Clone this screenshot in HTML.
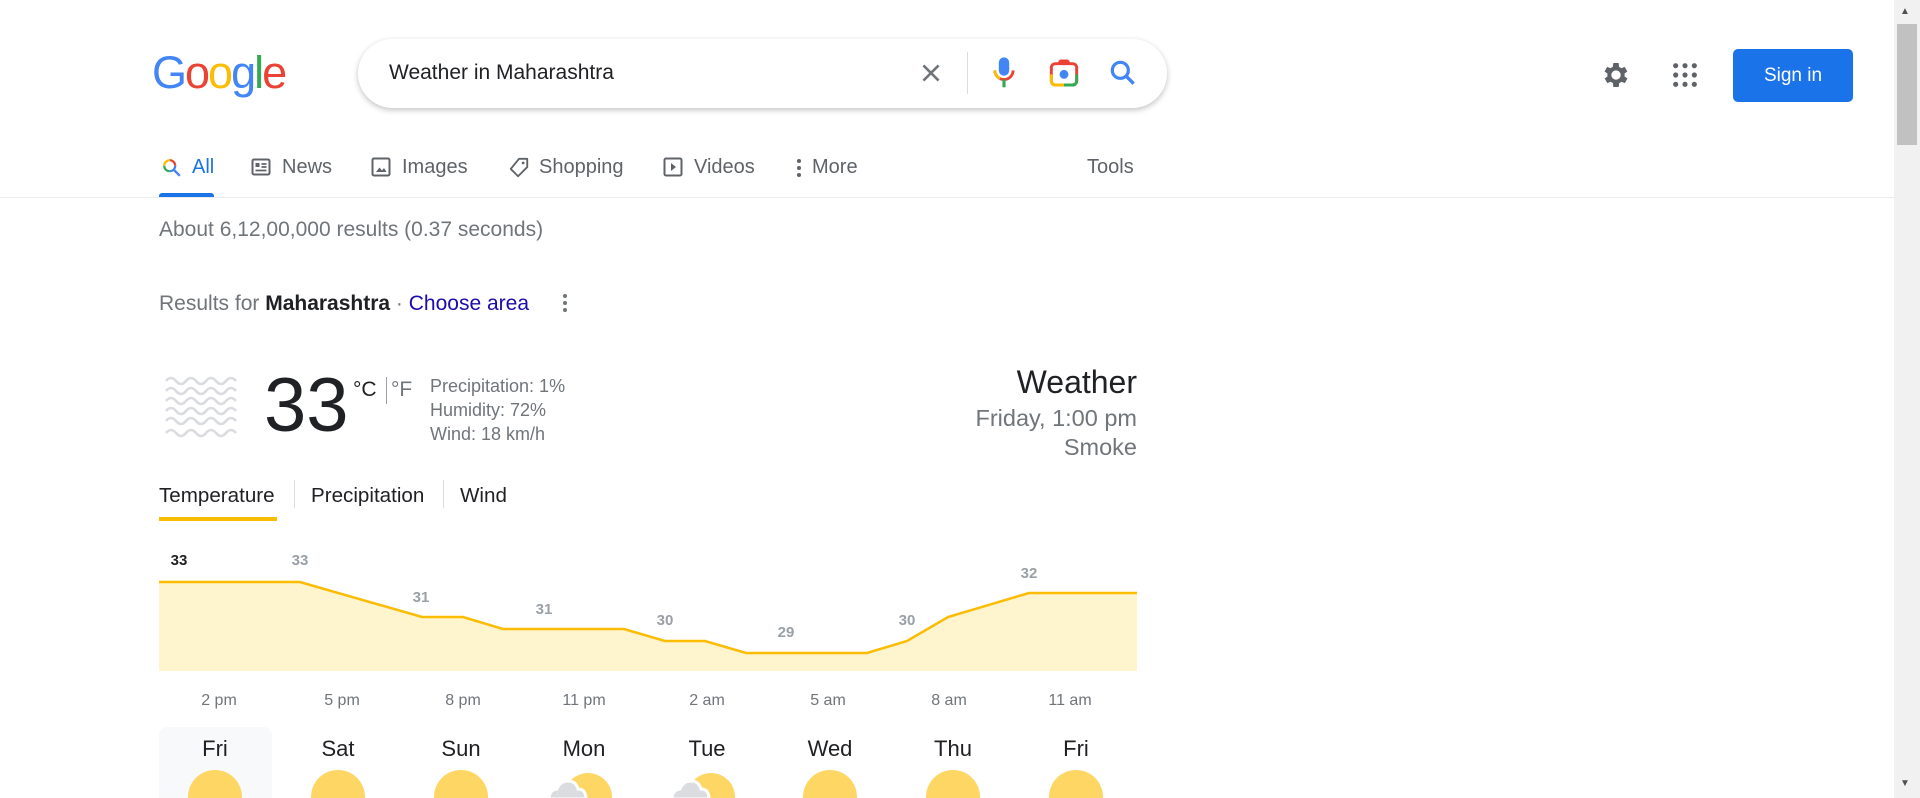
<!DOCTYPE html>
<html><head><meta charset="utf-8"><style>
*{margin:0;padding:0;box-sizing:border-box}
body{width:1920px;height:798px;overflow:hidden;background:#fff;font-family:"Liberation Sans",Arial,sans-serif;position:relative;color:#202124}
.a{position:absolute;white-space:nowrap}
.tab{position:absolute;top:156px;font-size:20px;color:#5f6368}
.tab svg{position:absolute;left:-31px;top:1px}
</style></head><body>
<div class="a" style="left:152px;top:47px;font-size:45px;letter-spacing:-2px;font-weight:normal"><span style="color:#4285f4">G</span><span style="color:#ea4335">o</span><span style="color:#fbbc05">o</span><span style="color:#4285f4">g</span><span style="color:#34a853">l</span><span style="color:#ea4335">e</span></div>
<div class="a" style="left:358px;top:39px;width:809px;height:69px;border-radius:35px;background:#fff;box-shadow:0 2px 6px rgba(32,33,36,.28)"></div>
<div class="a" style="left:389px;top:61px;font-size:21px;color:#202124">Weather in Maharashtra</div>
<svg class="a" style="left:918px;top:60px" width="26" height="26" viewBox="0 0 24 24"><path d="M5 5L19 19M19 5L5 19" stroke="#70757a" stroke-width="2.4"/></svg>
<div class="a" style="left:967px;top:52px;width:1px;height:42px;background:#dadce0"></div>
<svg class="a" style="left:991px;top:56px" width="26" height="34" viewBox="0 0 20 26"><rect x="6" y="1" width="8" height="14" rx="4" fill="#4285f4"/><path d="M3 11a7 7 0 0 0 14 0" stroke="#ea4335" stroke-width="2.2" fill="none"/><path d="M10 18v6" stroke="#34a853" stroke-width="2.4"/><path d="M3 11a7 7 0 0 0 4 6.3" stroke="#fbbc04" stroke-width="2.2" fill="none"/></svg>
<svg class="a" style="left:1048px;top:57px" width="32" height="32" viewBox="0 0 24 24"><rect x="2.5" y="5" width="19" height="16" rx="3" fill="none" stroke="#ea4335" stroke-width="2.2"/><path d="M2.5 13v5a3 3 0 0 0 3 3H12" stroke="#fbbc04" stroke-width="2.2" fill="none"/><path d="M12 21h6.5a3 3 0 0 0 3-3V13" stroke="#34a853" stroke-width="2.2" fill="none"/><path d="M8 5l1.5-2h5L16 5" stroke="#ea4335" stroke-width="2.2" fill="none"/><circle cx="12" cy="13" r="3.3" fill="#4285f4"/></svg>
<svg class="a" style="left:1107px;top:57px" width="32" height="32" viewBox="0 0 24 24"><circle cx="10" cy="10" r="6" fill="none" stroke="#4285f4" stroke-width="2.4"/><path d="M14.5 14.5L20 20" stroke="#4285f4" stroke-width="2.6"/></svg>
<svg class="a" style="left:1600px;top:59px" width="32" height="32" viewBox="0 0 24 24"><path fill="#5f6368" d="M19.4 13a7.5 7.5 0 0 0 0-2l2.1-1.6-2-3.5-2.5 1a7 7 0 0 0-1.7-1L15 3h-4l-.4 2.9a7 7 0 0 0-1.7 1l-2.5-1-2 3.5L6.6 11a7.5 7.5 0 0 0 0 2l-2.1 1.6 2 3.5 2.5-1a7 7 0 0 0 1.7 1L11 21h4l.4-2.9a7 7 0 0 0 1.7-1l2.5 1 2-3.5zM13 15.5a3.5 3.5 0 1 1 0-7 3.5 3.5 0 0 1 0 7z" transform="translate(-1 0)"/></svg>
<svg class="a" style="left:1671px;top:61px" width="28" height="28" viewBox="0 0 24 24" fill="#5f6368"><circle cx="4" cy="4" r="2.2"/><circle cx="12" cy="4" r="2.2"/><circle cx="20" cy="4" r="2.2"/><circle cx="4" cy="12" r="2.2"/><circle cx="12" cy="12" r="2.2"/><circle cx="20" cy="12" r="2.2"/><circle cx="4" cy="20" r="2.2"/><circle cx="12" cy="20" r="2.2"/><circle cx="20" cy="20" r="2.2"/></svg>
<div class="a" style="left:1733px;top:49px;width:120px;height:53px;border-radius:5px;background:#1a73e8;color:#fff;font-size:19px;text-align:center;line-height:53px">Sign in</div>
<div class="a" style="left:1894px;top:0;width:26px;height:798px;background:#f1f1f1"></div>
<div class="a" style="left:1897px;top:24px;width:20px;height:121px;background:#c1c1c1"></div>
<div class="a" style="left:1900px;top:6px;font-size:10px;color:#505050">▲</div>
<div class="a" style="left:1900px;top:778px;font-size:10px;color:#505050">▼</div>

<div class="tab" style="left:192px;color:#1a73e8"><svg width="22" height="22" viewBox="0 0 24 24"><path d="M9.5 3.5a6 6 0 0 1 6 6" stroke="#ea4335" stroke-width="2.4" fill="none"/><path d="M15.5 9.5a6 6 0 0 1-6 6" stroke="#4285f4" stroke-width="2.4" fill="none"/><path d="M9.5 15.5a6 6 0 0 1-6-6" stroke="#34a853" stroke-width="2.4" fill="none"/><path d="M3.5 9.5a6 6 0 0 1 6-6" stroke="#fbbc04" stroke-width="2.4" fill="none"/><path d="M14 14l6.5 6.5" stroke="#4285f4" stroke-width="2.6"/></svg>All</div>
<div class="tab" style="left:282px"><svg width="20" height="20" viewBox="0 0 20 20"><rect x="1.5" y="2.5" width="17" height="15" rx="1.5" fill="none" stroke="#5f6368" stroke-width="2"/><rect x="4.5" y="6" width="4" height="4" fill="#5f6368"/><path d="M10.5 7h5M10.5 10h5M4.5 13.5h11" stroke="#5f6368" stroke-width="1.8"/></svg>News</div>
<div class="tab" style="left:402px"><svg width="20" height="20" viewBox="0 0 20 20"><rect x="1.5" y="1.5" width="17" height="17" rx="1.5" fill="none" stroke="#5f6368" stroke-width="2"/><path d="M5 15l3.5-4.5 2.5 3 2-2.5 2.5 4z" fill="#5f6368"/></svg>Images</div>
<div class="tab" style="left:539px"><svg width="22" height="22" viewBox="0 0 24 24"><path d="M12 2h9v9L11 21 3 13z" fill="none" stroke="#5f6368" stroke-width="2" stroke-linejoin="round"/><circle cx="16.5" cy="6.5" r="1.5" fill="#5f6368"/></svg>Shopping</div>
<div class="tab" style="left:694px"><svg width="20" height="20" viewBox="0 0 20 20"><rect x="1.5" y="1.5" width="17" height="17" rx="1.5" fill="none" stroke="#5f6368" stroke-width="2"/><path d="M8 6l5 4-5 4z" fill="#5f6368"/></svg>Videos</div>
<div class="tab" style="left:812px"><svg style="left:-17px" width="8" height="22" viewBox="0 0 8 22"><circle cx="4" cy="4" r="2" fill="#5f6368"/><circle cx="4" cy="11" r="2" fill="#5f6368"/><circle cx="4" cy="18" r="2" fill="#5f6368"/></svg>More</div>
<div class="tab" style="left:1087px">Tools</div>
<div class="a" style="left:159px;top:193px;width:55px;height:4px;background:#1a73e8;border-radius:3px 3px 0 0"></div>
<div class="a" style="left:0;top:197px;width:1894px;height:1px;background:#ebebeb"></div>

<div class="a" style="left:159px;top:218px;font-size:21px;color:#70757a">About 6,12,00,000 results (0.37 seconds)</div>
<div class="a" style="left:159px;top:292px;font-size:21px;color:#70757a">Results for <b style="color:#202124">Maharashtra</b> · <span style="color:#1a0dab">Choose area</span></div>
<svg class="a" style="left:561px;top:292px" width="8" height="24"><circle cx="4" cy="4" r="2" fill="#70757a"/><circle cx="4" cy="11" r="2" fill="#70757a"/><circle cx="4" cy="18" r="2" fill="#70757a"/></svg>

<svg class="a" style="left:165px;top:376px" width="78" height="66" viewBox="0 0 78 66"><g fill="none" stroke="#dadce0" stroke-width="2.6">
<path d="M1 5q5-6 10 0t10 0t10 0t10 0t10 0t10 0t10 0"/><path d="M1 15q5-6 10 0t10 0t10 0t10 0t10 0t10 0t10 0"/><path d="M1 25q5-6 10 0t10 0t10 0t10 0t10 0t10 0t10 0"/><path d="M1 35q5-6 10 0t10 0t10 0t10 0t10 0t10 0t10 0"/><path d="M1 45q5-6 10 0t10 0t10 0t10 0t10 0t10 0t10 0"/><path d="M1 57q5-6 10 0t10 0t10 0t10 0t10 0t10 0t10 0"/></g></svg>
<div class="a" style="left:264px;top:368px;font-size:76px;line-height:76px;color:#202124">33</div>
<div class="a" style="left:353px;top:378px;font-size:21px;color:#202124">°C</div>
<div class="a" style="left:386px;top:377px;width:1px;height:27px;background:#9aa0a6"></div>
<div class="a" style="left:391px;top:378px;font-size:21px;color:#70757a">°F</div>
<div class="a" style="left:430px;top:374px;font-size:18px;line-height:24px;color:#70757a">Precipitation: 1%<br>Humidity: 72%<br>Wind: 18 km/h</div>
<div class="a" style="right:783px;top:364px;font-size:32px;color:#202124;text-align:right">Weather</div>
<div class="a" style="right:783px;top:404px;font-size:23.5px;line-height:29px;color:#70757a;text-align:right">Friday, 1:00 pm<br>Smoke</div>

<div class="a" style="left:159px;top:484px;font-size:20.6px;color:#202124">Temperature</div>
<div class="a" style="left:294px;top:480px;width:1px;height:28px;background:#dadce0"></div>
<div class="a" style="left:311px;top:484px;font-size:20.6px;color:#202124">Precipitation</div>
<div class="a" style="left:443px;top:480px;width:1px;height:28px;background:#dadce0"></div>
<div class="a" style="left:460px;top:484px;font-size:20.6px;color:#202124">Wind</div>
<div class="a" style="left:159px;top:517px;width:118px;height:4px;background:#fbbc04"></div>

<svg class="a" style="left:0;top:0" width="1200" height="798">
<path d="M159 582L300 582L422 617L463 617L503 629L624 629L665 641L705 641L746 653L867 653L907 641L948 617L1029 593L1137 593L1137 671L159 671Z" fill="#fef4cd"/>
<path d="M159 582L300 582L422 617L463 617L503 629L624 629L665 641L705 641L746 653L867 653L907 641L948 617L1029 593L1137 593" fill="none" stroke="#fbbc04" stroke-width="2.5"/>
<g font-family="Liberation Sans,Arial,sans-serif" font-weight="bold" font-size="15" fill="#9aa0a6" text-anchor="middle">
<text x="179" y="565" fill="#202124">33</text><text x="300" y="565">33</text><text x="421" y="602">31</text><text x="544" y="614">31</text><text x="665" y="625">30</text><text x="786" y="637">29</text><text x="907" y="625">30</text><text x="1029" y="578">32</text></g>
<g font-family="Liberation Sans,Arial,sans-serif" font-size="16" fill="#70757a" text-anchor="middle">
<text x="219" y="705">2 pm</text><text x="342" y="705">5 pm</text><text x="463" y="705">8 pm</text><text x="584" y="705">11 pm</text><text x="707" y="705">2 am</text><text x="828" y="705">5 am</text><text x="949" y="705">8 am</text><text x="1070" y="705">11 am</text></g>
<rect x="159" y="727" width="113" height="90" rx="8" fill="#f8f9fa"/>
<g font-family="Liberation Sans,Arial,sans-serif" font-size="22" fill="#202124" text-anchor="middle">
<text x="215" y="756">Fri</text><text x="338" y="756">Sat</text><text x="461" y="756">Sun</text><text x="584" y="756">Mon</text><text x="707" y="756">Tue</text><text x="830" y="756">Wed</text><text x="953" y="756">Thu</text><text x="1076" y="756">Fri</text></g>
<g fill="#fdd663"><circle cx="215" cy="797" r="27"/><circle cx="338" cy="797" r="27"/><circle cx="461" cy="797" r="27"/><circle cx="830" cy="797" r="27"/><circle cx="953" cy="797" r="27"/><circle cx="1076" cy="797" r="27"/>
<circle cx="588" cy="797" r="24"/><circle cx="711" cy="797" r="24"/></g>
<g fill="#dadce0" stroke="#fff" stroke-width="3"><path d="M549 799q0-9 8-10q3-8 11-8q8 0 10 8q8 0 8 10z"/><path d="M672 799q0-9 8-10q3-8 11-8q8 0 10 8q8 0 8 10z"/></g>
</svg>
</body></html>
